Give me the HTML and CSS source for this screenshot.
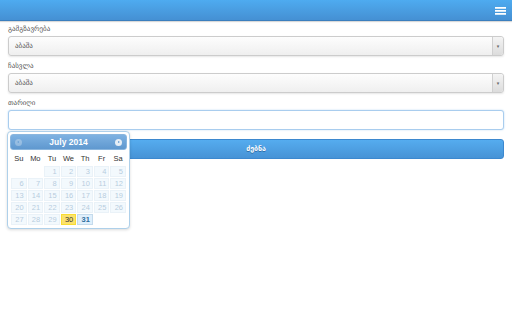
FILE: index.html
```html
<!DOCTYPE html>
<html lang="ka">
<head>
    <meta charset="UTF-8">
    <meta name="viewport" content="width=device-width, initial-scale=1.0">
    <title>ბილეთები</title>
    <link rel="stylesheet" href="styles.css">
</head>
<body>
    <div id="header">
        <span class="menu-btn"><i></i><i></i><i></i></span>
    </div>
    <div id="content">
        <div class="field">
            <label>გამგზავრება</label>
            <div class="select">აბაშა<span class="arrow">▾</span></div>
        </div>
        <div class="field">
            <label>ჩასვლა</label>
            <div class="select">აბაშა<span class="arrow">▾</span></div>
        </div>
        <div class="field">
            <label>თარიღი</label>
            <input type="text" class="date-input">
        </div>
        <button class="search">ძებნა</button>

        <div class="datepicker">
            <div class="dp-header">
                <span class="dp-nav prev"></span>
                <span class="dp-title">July 2014</span>
                <span class="dp-nav next"></span>
            </div>
            <table class="dp-table">
                <thead>
                    <tr><th>Su</th><th>Mo</th><th>Tu</th><th>We</th><th>Th</th><th>Fr</th><th>Sa</th></tr>
                </thead>
                <tbody>
                    <tr><td class="empty"></td><td class="empty"></td><td class="off"><span>1</span></td><td class="off"><span>2</span></td><td class="off"><span>3</span></td><td class="off"><span>4</span></td><td class="off"><span>5</span></td></tr>
                    <tr><td class="off"><span>6</span></td><td class="off"><span>7</span></td><td class="off"><span>8</span></td><td class="off"><span>9</span></td><td class="off"><span>10</span></td><td class="off"><span>11</span></td><td class="off"><span>12</span></td></tr>
                    <tr><td class="off"><span>13</span></td><td class="off"><span>14</span></td><td class="off"><span>15</span></td><td class="off"><span>16</span></td><td class="off"><span>17</span></td><td class="off"><span>18</span></td><td class="off"><span>19</span></td></tr>
                    <tr><td class="off"><span>20</span></td><td class="off"><span>21</span></td><td class="off"><span>22</span></td><td class="off"><span>23</span></td><td class="off"><span>24</span></td><td class="off"><span>25</span></td><td class="off"><span>26</span></td></tr>
                    <tr><td class="off"><span>27</span></td><td class="off"><span>28</span></td><td class="off"><span>29</span></td><td class="today"><span>30</span></td><td class="day"><span>31</span></td><td class="empty"></td><td class="empty"></td></tr>
                </tbody>
            </table>
        </div>
    </div>
</body>
</html>
```

FILE: styles.css
```css
html, body {
    height: 100%;
}
body {
    margin: 0;
    font-family: "DejaVu Sans", sans-serif;
    background: #fff;
    color: #333;
}
#header {
    height: 20px;
    background: linear-gradient(#4eabf0, #4590d3);
    border-bottom: 1px solid #3b7fbe;
    box-shadow: 0 1px 1px rgba(0,0,0,0.15);
    display: flex;
    justify-content: flex-end;
    align-items: center;
    padding-right: 6px;
}
.menu-btn {
    display: flex;
    flex-direction: column;
    gap: 2px;
    width: 11px;
}
.menu-btn i {
    display: block;
    height: 1px;
    background: #fff;
    box-shadow: 0 1px 0 #d6e8f6;
}
#content {
    position: relative;
    min-height: 280px;
    padding: 2px 8px 0 8px;
}
.field {
    margin-bottom: 4px;
}
.field label {
    display: block;
    height: 13px;
    font-size: 7px;
    line-height: 13px;
    color: #555;
}
.select {
    position: relative;
    height: 18px;
    line-height: 18px;
    border: 1px solid #ccc;
    border-radius: 3px;
    background: linear-gradient(#fdfdfd, #efefef);
    font-size: 7px;
    padding-left: 6px;
    color: #555;
    box-shadow: 0 1px 2px rgba(0,0,0,0.1);
}
.arrow {
    position: absolute;
    right: 0;
    top: 0;
    width: 10px;
    height: 18px;
    border-left: 1px solid #d0d0d0;
    background: linear-gradient(#f4f4f4, #dcdcdc);
    font-size: 5px;
    text-align: center;
    color: #666;
    border-radius: 0 3px 3px 0;
}
.date-input {
    display: block;
    box-sizing: border-box;
    width: 100%;
    height: 20px;
    margin: 0;
    border: 1px solid #a9cdee;
    border-radius: 3px;
    box-shadow: 0 0 2px #b9d8f3;
    outline: none;
}
.search {
    display: block;
    width: 100%;
    height: 20px;
    margin-top: 9px;
    border: 1px solid #3c88cf;
    border-radius: 3px;
    background: linear-gradient(#55acef, #4793d6);
    color: #fff;
    font-family: "DejaVu Sans", sans-serif;
    font-size: 7px;
    font-weight: bold;
    text-shadow: 0 1px 0 #2f6ea8;
    padding: 0;
}
.datepicker {
    position: absolute;
    left: 7px;
    top: 110px;
    width: 117px;
    padding: 2px;
    background: #fff;
    border: 1px solid #aed0ea;
    border-radius: 4px;
    box-shadow: 0 1px 3px rgba(0,0,0,0.15);
    font-family: "Liberation Sans", Arial, sans-serif;
}
.dp-header {
    height: 14px;
    border: 1px solid #8ab6de;
    border-radius: 3px;
    background: linear-gradient(#7eb2e2, #5f98cf);
    display: flex;
    align-items: center;
    justify-content: space-between;
    padding: 0 4px;
}
.dp-title {
    color: #fff;
    font-size: 8.5px;
    font-weight: bold;
}
.dp-nav {
    width: 7px;
    height: 7px;
    border-radius: 50%;
    background: #e6eef6;
    position: relative;
}
.dp-nav.prev {
    opacity: 0.35;
}
.dp-nav::after {
    content: "";
    position: absolute;
    top: 2px;
    left: 3px;
    border-top: 1.5px solid transparent;
    border-bottom: 1.5px solid transparent;
    border-left: 2px solid #5f98cf;
}
.dp-nav.prev::after {
    left: 2px;
    border-left: none;
    border-right: 2px solid #5f98cf;
}
.dp-table {
    width: 100%;
    border-collapse: separate;
    border-spacing: 1px;
    font-size: 7.5px;
}
.dp-table th {
    height: 14px;
    font-weight: normal;
    color: #333;
    text-align: center;
    padding: 0;
}
.dp-table td {
    height: 11px;
    padding: 0;
    text-align: right;
}
.dp-table td span {
    display: block;
    height: 9px;
    line-height: 9px;
    padding-right: 2px;
    border: 1px solid #c5dbec;
    background: #dfeffc;
    color: #2e6e9e;
}
.dp-table td.off span {
    opacity: 0.35;
}
.dp-table td.today span {
    border-color: #f9dd34;
    background: #fbe26c;
    color: #363636;
}
.dp-table td.day span {
    font-weight: bold;
}
```
